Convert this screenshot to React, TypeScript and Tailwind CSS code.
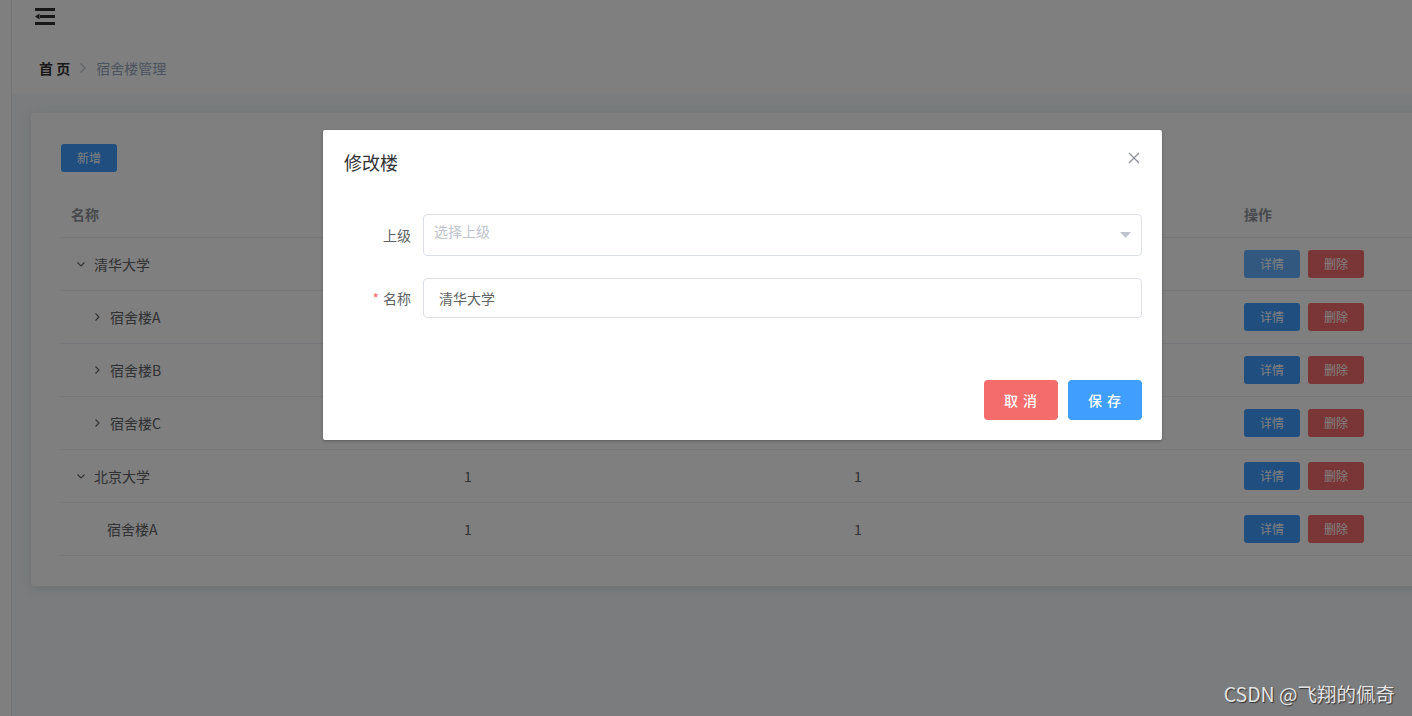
import React from "react";

type Row = {
  name: string;
  level: number;
  expand: "open" | "closed" | null;
  a: string;
  b: string;
  hover?: boolean;
};

const rows: Row[] = [
  { name: "清华大学", level: 0, expand: "open", a: "1", b: "1", hover: true },
  { name: "宿舍楼A", level: 1, expand: "closed", a: "1", b: "1" },
  { name: "宿舍楼B", level: 1, expand: "closed", a: "1", b: "1" },
  { name: "宿舍楼C", level: 1, expand: "closed", a: "1", b: "1" },
  { name: "北京大学", level: 0, expand: "open", a: "1", b: "1" },
  { name: "宿舍楼A", level: 1, expand: null, a: "1", b: "1" },
];

const font = { fontFamily: '"Noto Sans CJK SC", "Noto Sans", sans-serif' };

function Hamburger() {
  return (
    <svg width="20" height="17" viewBox="0 0 20 17" fill="#303133">
      <rect x="0" y="0" width="20" height="3" />
      <rect x="5" y="7" width="15" height="3" />
      <polygon points="0,8.5 4.5,5.5 4.5,11.5" />
      <rect x="0" y="14" width="20" height="3" />
    </svg>
  );
}

function Chevron({ dir }: { dir: "down" | "right" }) {
  return (
    <svg width="10" height="10" viewBox="0 0 10 10" fill="none" stroke="#606266" strokeWidth="1.1">
      {dir === "down" ? <polyline points="1.5,3.5 5,7 8.5,3.5" /> : <polyline points="3.5,1.5 7,5 3.5,8.5" />}
    </svg>
  );
}

function NameCell({ row }: { row: Row }) {
  return (
    <div className="flex items-center" style={{ paddingLeft: row.level * 16 }}>
      {row.expand ? (
        <span className="w-[20px] h-[20px] mr-[3px] flex items-center justify-center">
          <Chevron dir={row.expand === "open" ? "down" : "right"} />
        </span>
      ) : (
        <span className="w-[20px] h-[20px]" />
      )}
      <span>{row.name}</span>
    </div>
  );
}

export default function App() {
  return (
    <div className="relative w-[1412px] h-[716px] overflow-hidden flex bg-white" style={font}>
      {/* 侧边栏 */}
      <div className="w-[12px] h-full bg-white border-r border-[#e6e6e6] shrink-0" />

      <div className="flex-1 min-w-0 flex flex-col overflow-hidden">
        <div className="h-[32px] flex items-center pl-[23px]">
          <Hamburger />
        </div>
        <div className="h-[62px] pt-[10px] flex items-center pl-[27px] text-sm">
          <span className="font-bold text-[#303133]">首 页</span>
          <span className="mx-[9px] text-[#c0c4cc]">
            <svg width="8" height="12" viewBox="0 0 8 12" fill="none" stroke="#c0c4cc" strokeWidth="1.2">
              <polyline points="1.5,1.5 6,6 1.5,10.5" />
            </svg>
          </span>
          <span className="text-[#97a8be]">宿舍楼管理</span>
        </div>

        <div className="flex-1 bg-[#f4f9fa] pt-[19px] pl-[19px]">
          <div className="w-[1623px] bg-white rounded shadow-[0_2px_12px_0_rgba(0,0,0,0.1)] px-[30px] pt-[31px] pb-[30px]">
            <button type="button" className="w-[56px] h-[28px] rounded-[3px] bg-[#409eff] text-white text-xs">
              新增
            </button>

            <div className="mt-[18px] text-sm text-[#606266]">
              <div className="grid grid-cols-[393px_390px_390px_390px] h-[48px] items-center border-b border-[#ebeef5] font-bold text-[#909399]">
                <div className="pl-[10px]">名称</div>
                <div className="pl-[10px]">排序</div>
                <div className="pl-[10px]">数量</div>
                <div className="pl-[10px]">操作</div>
              </div>
              {rows.map((row, i) => (
                <div
                  key={i}
                  className="grid grid-cols-[393px_390px_390px_390px] h-[53px] items-center border-b border-[#ebeef5]"
                >
                  <div className="pl-[10px]">
                    <NameCell row={row} />
                  </div>
                  <div className="pl-[10px]">{row.a}</div>
                  <div className="pl-[10px]">{row.b}</div>
                  <div className="pl-[10px] flex gap-2">
                    <button
                      type="button"
                      className={`w-[56px] h-[28px] rounded-[3px] text-white text-xs ${row.hover ? "bg-[#66b1ff]" : "bg-[#409eff]"}`}
                    >
                      详情
                    </button>
                    <button type="button" className="w-[56px] h-[28px] rounded-[3px] bg-[#f56c6c] text-white text-xs">
                      删除
                    </button>
                  </div>
                </div>
              ))}
            </div>
          </div>
        </div>
      </div>

      {/* 遮罩与弹窗 */}
      <div className="absolute inset-0 bg-black/50" />
      <div className="absolute left-[323px] top-[130px] w-[839px] bg-white rounded-[2px] shadow-[0_1px_3px_rgba(0,0,0,0.3)]">
        <div className="relative px-[21px] pt-[20px] pb-[10px]">
          <div className="text-lg leading-6 text-[#303133]">修改楼</div>
          <button type="button" className="absolute right-[22px] top-[22px] w-[12px] h-[12px]">
            <svg width="12" height="12" viewBox="0 0 12 12" stroke="#909399" strokeWidth="1.2">
              <line x1="1" y1="1" x2="11" y2="11" />
              <line x1="11" y1="1" x2="1" y2="11" />
            </svg>
          </button>
        </div>

        <div className="px-[20px] pt-[30px] pb-[30px] text-sm">
          <div className="flex items-center mb-[22px]">
            <label className="w-[80px] pr-[12px] text-right text-[#606266]">上级</label>
            <div className="flex-1 h-[42px] border border-[#dcdfe6] rounded flex items-center justify-between pl-[10px] pr-[10px]">
              <span className="text-[#c0c4cc] -mt-[8px]">选择上级</span>
              <svg width="11" height="6" viewBox="0 0 11 6" fill="#c0c4cc">
                <polygon points="0,0 11,0 5.5,6" />
              </svg>
            </div>
          </div>
          <div className="flex items-center">
            <label className="w-[80px] pr-[12px] text-right text-[#606266]">
              <span className="text-[#f56c6c] mr-[4px]">*</span>名称
            </label>
            <div className="flex-1 h-[40px] border border-[#dcdfe6] rounded flex items-center pl-[15px] text-[#606266]">
              清华大学
            </div>
          </div>
        </div>

        <div className="flex justify-end gap-[10px] px-[20px] pt-[32px] pb-[20px]">
          <button type="button" className="w-[74px] h-[40px] rounded bg-[#f56c6c] text-white text-sm font-medium tracking-[1px]">
            取 消
          </button>
          <button type="button" className="w-[74px] h-[40px] rounded bg-[#409eff] text-white text-sm font-medium tracking-[1px]">
            保 存
          </button>
        </div>
      </div>

      <div className="absolute right-[17px] bottom-[8px] text-[19.5px] text-[#e4e4e4] [text-shadow:1px_1px_1px_rgba(0,0,0,0.6)]">
        CSDN @飞翔的佩奇
      </div>
    </div>
  );
}
